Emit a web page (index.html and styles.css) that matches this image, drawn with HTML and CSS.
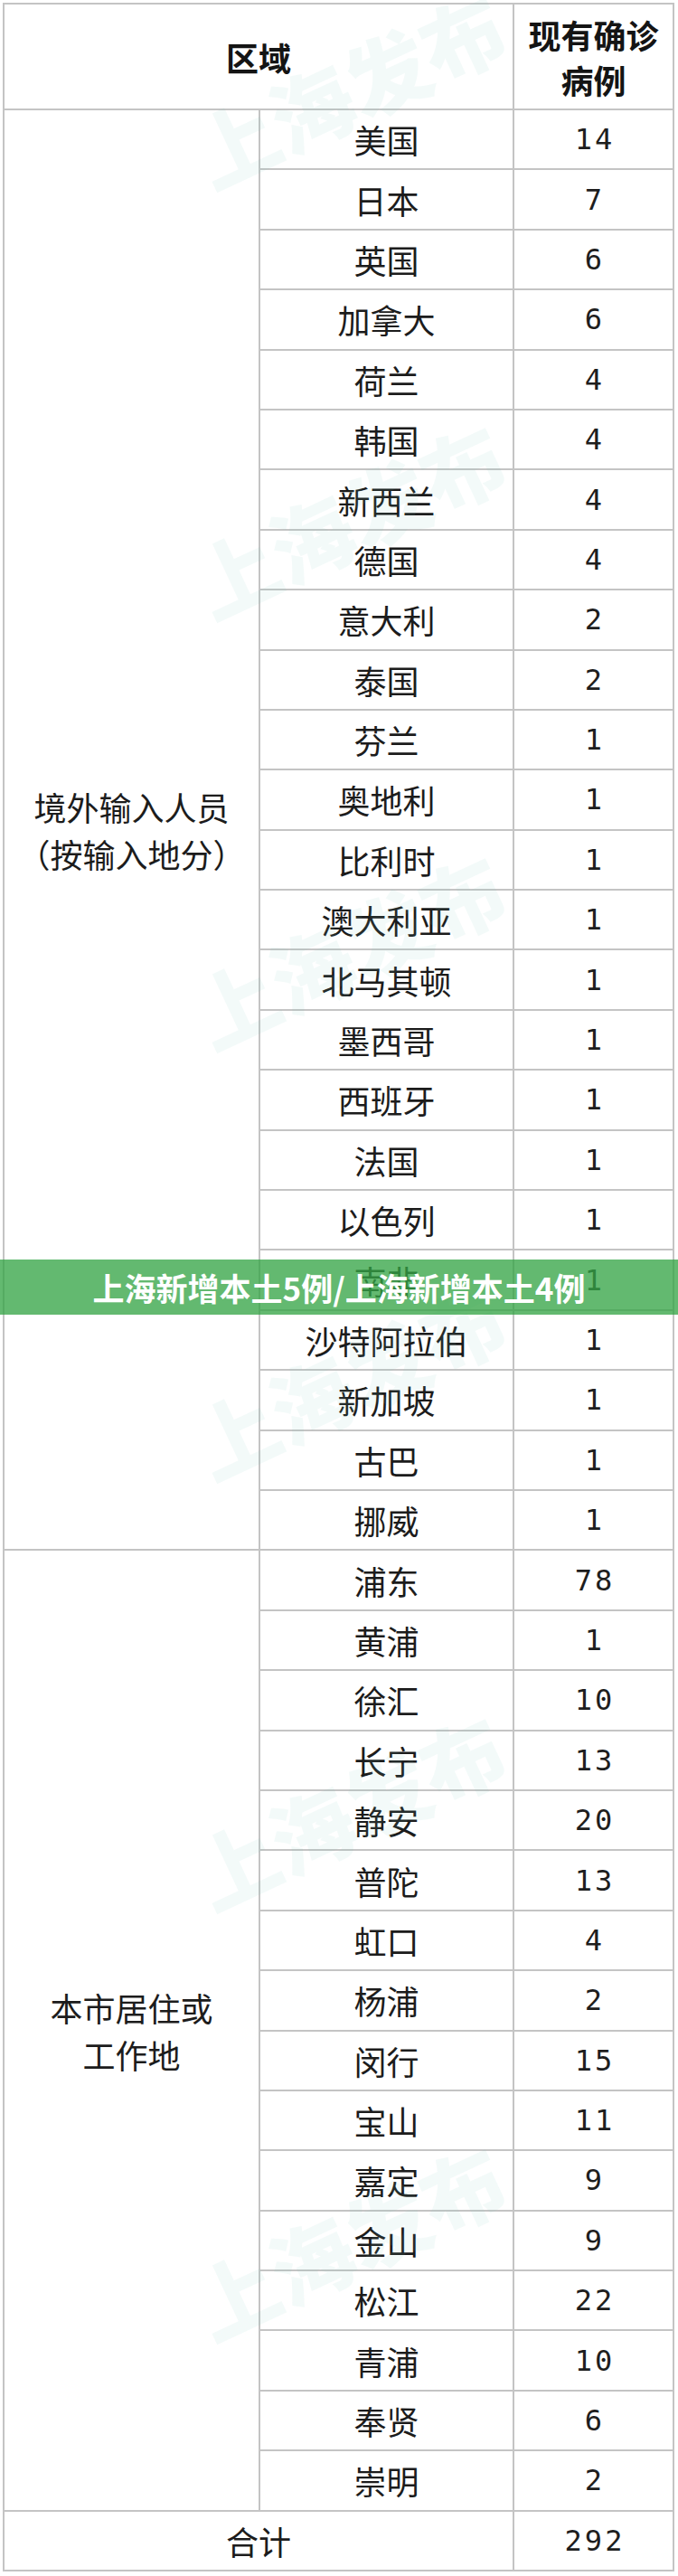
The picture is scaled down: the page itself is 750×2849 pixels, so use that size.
FILE: index.html
```html
<!DOCTYPE html>
<html lang="zh-CN">
<head>
<meta charset="utf-8">
<title>上海新增本土5例/上海新增本土4例</title>
<link rel="stylesheet" href="styles.css">
</head>
<body>
<div class="page">
  <div class="table">
    <div class="cell head wide">区域</div>
    <div class="cell head">现有确诊<br>病例</div>

    <div class="cell group g-foreign">境外输入人员<br>（按输入地分）</div>
    <div class="cell name">美国</div><div class="cell num">14</div>
    <div class="cell name">日本</div><div class="cell num">7</div>
    <div class="cell name">英国</div><div class="cell num">6</div>
    <div class="cell name">加拿大</div><div class="cell num">6</div>
    <div class="cell name">荷兰</div><div class="cell num">4</div>
    <div class="cell name">韩国</div><div class="cell num">4</div>
    <div class="cell name">新西兰</div><div class="cell num">4</div>
    <div class="cell name">德国</div><div class="cell num">4</div>
    <div class="cell name">意大利</div><div class="cell num">2</div>
    <div class="cell name">泰国</div><div class="cell num">2</div>
    <div class="cell name">芬兰</div><div class="cell num">1</div>
    <div class="cell name">奥地利</div><div class="cell num">1</div>
    <div class="cell name">比利时</div><div class="cell num">1</div>
    <div class="cell name">澳大利亚</div><div class="cell num">1</div>
    <div class="cell name">北马其顿</div><div class="cell num">1</div>
    <div class="cell name">墨西哥</div><div class="cell num">1</div>
    <div class="cell name">西班牙</div><div class="cell num">1</div>
    <div class="cell name">法国</div><div class="cell num">1</div>
    <div class="cell name">以色列</div><div class="cell num">1</div>
    <div class="cell name">南非</div><div class="cell num">1</div>
    <div class="cell name">沙特阿拉伯</div><div class="cell num">1</div>
    <div class="cell name">新加坡</div><div class="cell num">1</div>
    <div class="cell name">古巴</div><div class="cell num">1</div>
    <div class="cell name">挪威</div><div class="cell num">1</div>

    <div class="cell group g-local">本市居住或<br>工作地</div>
    <div class="cell name">浦东</div><div class="cell num">78</div>
    <div class="cell name">黄浦</div><div class="cell num">1</div>
    <div class="cell name">徐汇</div><div class="cell num">10</div>
    <div class="cell name">长宁</div><div class="cell num">13</div>
    <div class="cell name">静安</div><div class="cell num">20</div>
    <div class="cell name">普陀</div><div class="cell num">13</div>
    <div class="cell name">虹口</div><div class="cell num">4</div>
    <div class="cell name">杨浦</div><div class="cell num">2</div>
    <div class="cell name">闵行</div><div class="cell num">15</div>
    <div class="cell name">宝山</div><div class="cell num">11</div>
    <div class="cell name">嘉定</div><div class="cell num">9</div>
    <div class="cell name">金山</div><div class="cell num">9</div>
    <div class="cell name">松江</div><div class="cell num">22</div>
    <div class="cell name">青浦</div><div class="cell num">10</div>
    <div class="cell name">奉贤</div><div class="cell num">6</div>
    <div class="cell name">崇明</div><div class="cell num">2</div>

    <div class="cell total wide">合计</div>
    <div class="cell num">292</div>
  </div>

  <div class="wm wm1">上海发布</div>
  <div class="wm wm2">上海发布</div>
  <div class="wm wm3">上海发布</div>
  <div class="wm wm4">上海发布</div>
  <div class="wm wm5">上海发布</div>
  <div class="wm wm6">上海发布</div>

  <div class="banner">上海新增本土5例/上海新增本土4例</div>
</div>
</body>
</html>
```

FILE: styles.css
```css
html, body {
  margin: 0;
  padding: 0;
  background: #ffffff;
}

.page {
  position: relative;
  width: 750px;
  height: 2849px;
  overflow: hidden;
  padding-top: 3px;
  padding-left: 3px;
  box-sizing: border-box;
  font-family: "Noto Sans CJK SC", "Noto Sans", sans-serif;
  color: #1c1c1c;
}

.table {
  display: grid;
  width: 743px;
  box-sizing: border-box;
  grid-template-columns: 281px 279px 175px;
  grid-template-rows: 115px repeat(40, 64.4px) 64px;
  gap: 2px;
  padding: 2px;
  background: #c4c4c4;
}

.cell {
  background: #ffffff;
  display: flex;
  align-items: center;
  justify-content: center;
  text-align: center;
  font-size: 36px;
  line-height: 1;
}

.wide {
  grid-column: 1 / span 2;
}

.head {
  font-weight: 700;
  line-height: 50px;
  color: #141414;
}

.group {
  grid-column: 1;
  line-height: 52px;
}

.g-foreign {
  grid-row: 2 / span 24;
}

.g-local {
  grid-row: 26 / span 16;
}

.name {
  grid-column: 2;
}

.num {
  grid-column: 3;
  font-family: "DejaVu Sans Mono", "Liberation Mono", monospace;
  font-size: 32px;
  letter-spacing: 3px;
  padding-left: 3px;
  color: #1e1e1e;
}

.total {
  font-size: 36px;
}

.wm {
  position: absolute;
  left: 385px;
  font-size: 92px;
  font-weight: 900;
  white-space: nowrap;
  line-height: 1;
  color: rgba(120, 200, 185, 0.09);
  transform: translate(-50%, -50%) rotate(-25deg);
  pointer-events: none;
}

.wm1 { top: 97px; }
.wm2 { top: 573px; }
.wm3 { top: 1049px; }
.wm4 { top: 1525px; }
.wm5 { top: 2001px; }
.wm6 { top: 2477px; }

.banner {
  position: absolute;
  left: 0;
  top: 1393px;
  width: 750px;
  height: 61px;
  display: flex;
  align-items: center;
  justify-content: center;
  background: rgba(52, 164, 69, 0.77);
  color: #ffffff;
  font-size: 35px;
  font-weight: 700;
  line-height: 1;
}
```
